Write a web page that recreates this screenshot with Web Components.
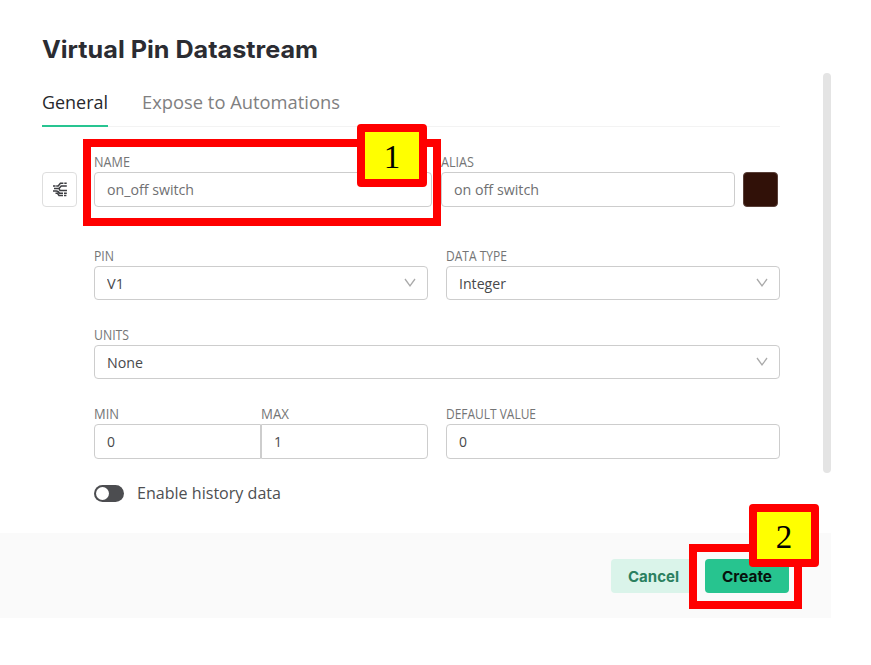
<!DOCTYPE html>
<html lang="en"><head><meta charset="utf-8"><title>Virtual Pin Datastream</title>
<style>html,body{margin:0;background:#fff}body{width:871px;height:665px;overflow:hidden;font-family:"Open Sans","Noto Sans",sans-serif}</style>
</head><body><datastream-page></datastream-page>
<script>
class Base extends HTMLElement{
  constructor(){super();this.attachShadow({mode:'open'})}
  a(n,d=''){return this.getAttribute(n)??d}
  draw(css,html){this.shadowRoot.innerHTML='<style>*{box-sizing:border-box}'+css+'</style>'+html}
}
// Text condensed or widened to a given width
customElements.define('fit-text',class extends Base{
  connectedCallback(){
    this.draw(':host{display:block;white-space:nowrap}span{display:inline-block;transform-origin:0 50%}','<span><slot></slot></span>');
    const s=this.shadowRoot.querySelector('span');
    const n=s.getBoundingClientRect().width;
    if(n)s.style.transform='scaleX('+(+this.a('w')/n)+')';
    this.style.width=this.a('w')+'px';
  }
});
customElements.define('form-field',class extends Base{
  connectedCallback(){
    const sel=this.hasAttribute('select');
    this.draw(`:host{display:block}
    .label{font-size:13.6px;line-height:20px;height:20px;margin-bottom:1px;padding-top:1px;color:#747576}
    .box{height:var(--h,34px);border:1px solid #cdcdcd;border-radius:var(--r,4px);background:#fff;display:flex;align-items:center;justify-content:space-between;padding:0 11px 1px 12px;font-size:14.8px;line-height:20px;color:var(--ink,#48494b)}
    svg{width:12px;height:12px}`,
    `<fit-text class="label" w="${this.a('lw')}">${this.a('label')}</fit-text><div class="box"><fit-text w="${this.a('vw')}">${this.a('value')}</fit-text>${sel?'<svg viewBox="0 0 12 12"><path d="M1 2l5 7 5-7" fill="none" stroke="#aaa" stroke-width="1.3"/></svg>':''}</div>`);
  }
});
customElements.define('pin-icon',class extends Base{
  connectedCallback(){this.draw(':host{display:flex;align-items:center;justify-content:center;width:35px;height:35px;border:1px solid #dedede;border-radius:4px;box-sizing:border-box}svg{width:16px;height:15px}',
  `<svg viewBox="0 0 16 15" fill="none" stroke="#3c3d41" stroke-width="1.5"><path d="M1 4h2.6M4.2 4h2L8.4 1.3h3M12.3 1.3h2.4M2 6.5h5L9.2 4h5.6M1 9h3.4L6 9.4l1.6 1.9H11M12 11.3h2.8M7 6.5L8 8.6h7M3.5 11.3h2L7 13.5h4M12 13.5h2.4"/></svg>`)}
});
customElements.define('toggle-switch',class extends Base{
  connectedCallback(){this.draw(':host{display:block;width:30px;height:17px;border-radius:9px;background:#4c4d50;padding:2px;box-sizing:border-box}i{display:block;width:13px;height:13px;border-radius:50%;background:#fff}','<i></i>')}
});
customElements.define('action-button',class extends Base{
  connectedCallback(){this.draw(':host{display:flex;align-items:center;justify-content:center;width:84px;height:34px;padding-top:1px;box-sizing:border-box;border-radius:4px;background:var(--bg);color:var(--fg);font:700 15px/20px Inter,sans-serif}','<slot></slot>')}
});
customElements.define('call-out',class extends Base{
  connectedCallback(){this.draw(':host{display:block;position:absolute;border:8px solid #f00}','')}
});
customElements.define('step-badge',class extends Base{
  connectedCallback(){this.draw(':host{position:absolute;display:flex;align-items:center;justify-content:center;width:70px;height:63px;border:8px solid #f00;border-radius:4px;background:#ff0;color:#000;font:33px/47px "Liberation Serif",serif;padding-top:3px}','<slot></slot>')}
});
customElements.define('datastream-page',class extends Base{
  connectedCallback(){this.draw(`
  :host{display:block;position:relative;width:871px;height:665px;background:#fff}
  .dialog{width:831px;height:618px;display:flex;flex-direction:column}
  .head{height:73px;padding:35px 0 0 42px}
  .title{font:700 24px/30px Inter,sans-serif;color:#2b2c32}
  .body{height:460px;display:flex;justify-content:space-between}
  .content{width:738px;margin-left:42px}
  .tabs{display:flex;gap:34px;height:54px;border-bottom:1px solid #f3f3f3;font-size:18.6px;line-height:26px}
  .tab{height:54px;padding-top:16px;color:#7f8081}
  .on{color:#26272b;border-bottom:2px solid #28c491}
  .r1{display:flex;align-items:flex-end;margin-top:24px;height:56px;--h:35px;--ink:#6f7072}
  .r1 .n{width:338px;margin-left:17px}.r1 .al{width:294px;margin-left:9px}
  .swatch{width:35px;height:35px;margin-left:8px;border-radius:4px;background:#311108;border:1px solid #593f38}
  .grid{margin-left:52px;display:grid;grid-template-columns:334px 334px;column-gap:18px;row-gap:24px;margin-top:38px}
  .wide{grid-column:1/3}.pair{display:grid;grid-template-columns:167px 167px}
  .last{--h:35px}.pair .a{--r:4px 0 0 4px}.pair .b{--r:0 4px 4px 0}
  .hist{display:flex;align-items:center;gap:13px;margin:21px 0 0 52px;height:26px;font-size:16.8px;line-height:24px;color:#4e4f52}
  .scroll{width:8px;height:400px;border-radius:4px;background:#e4e4e4}
  .foot{height:85px;background:#fafafa;display:flex;gap:10px;padding:26px 0 0 611px}`,
  `<div class="dialog"><div class="head"><fit-text class="title" w="276">Virtual Pin Datastream</fit-text></div>
  <div class="body"><div class="content">
   <div class="tabs"><fit-text class="tab on" w="66">General</fit-text><fit-text class="tab" w="198">Expose to Automations</fit-text></div>
   <div class="r1"><pin-icon></pin-icon><form-field class="n" label="NAME" lw="36" value="on_off switch" vw="87"></form-field><form-field class="al" label="ALIAS" lw="33" value="on off switch" vw="85"></form-field><div class="swatch"></div></div>
   <div class="grid">
    <form-field select label="PIN" lw="20" value="V1" vw="17"></form-field><form-field select label="DATA TYPE" lw="61" value="Integer" vw="47"></form-field>
    <form-field class="wide" select label="UNITS" lw="35" value="None" vw="36"></form-field>
    <div class="pair last"><form-field class="a" label="MIN" lw="25" value="0" vw="8"></form-field><form-field class="b" label="MAX" lw="28" value="1" vw="8"></form-field></div>
    <form-field class="last" label="DEFAULT VALUE" lw="90" value="0" vw="8"></form-field>
   </div>
   <div class="hist"><toggle-switch></toggle-switch><fit-text w="144">Enable history data</fit-text></div>
  </div><div class="scroll"></div></div>
  <div class="foot"><action-button style="--bg:#daf4ea;--fg:#2b8060"><fit-text w="51">Cancel</fit-text></action-button><action-button style="--bg:#27c48f;--fg:#07110d"><fit-text w="50">Create</fit-text></action-button></div></div>
  <call-out style="left:83px;top:139px;width:358px;height:87px;box-sizing:border-box"></call-out>
  <call-out style="left:689px;top:544px;width:113px;height:65px;box-sizing:border-box"></call-out>
  <step-badge style="left:357px;top:124px;box-sizing:border-box">1</step-badge>
  <step-badge style="left:749px;top:504px;box-sizing:border-box">2</step-badge>`)}
});
</script></body></html>
